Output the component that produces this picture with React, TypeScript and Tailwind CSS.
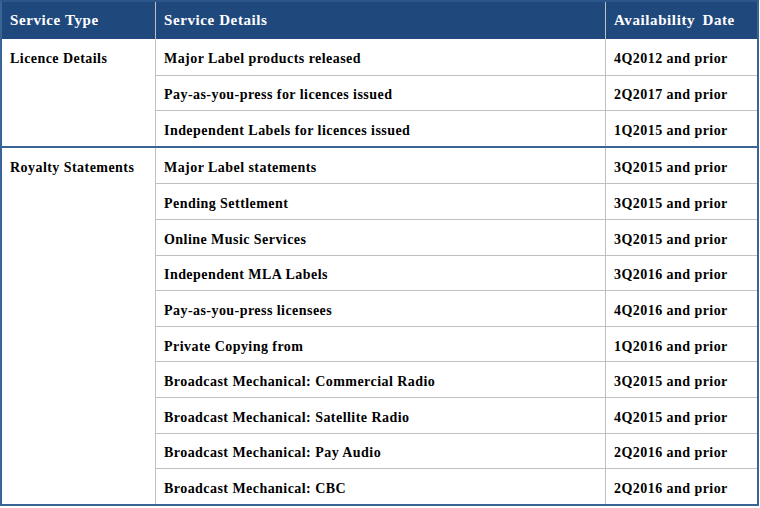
const groups = [
  {
    name: "Licence Details",
    rows: [
      ["Major Label products released", "4Q2012 and prior"],
      ["Pay-as-you-press for licences issued", "2Q2017 and prior"],
      ["Independent Labels for licences issued", "1Q2015 and prior"],
    ],
  },
  {
    name: "Royalty Statements",
    rows: [
      ["Major Label statements", "3Q2015 and prior"],
      ["Pending Settlement", "3Q2015 and prior"],
      ["Online Music Services", "3Q2015 and prior"],
      ["Independent MLA Labels", "3Q2016 and prior"],
      ["Pay-as-you-press licensees", "4Q2016 and prior"],
      ["Private Copying from", "1Q2016 and prior"],
      ["Broadcast Mechanical: Commercial Radio", "3Q2015 and prior"],
      ["Broadcast Mechanical: Satellite Radio", "4Q2015 and prior"],
      ["Broadcast Mechanical: Pay Audio", "2Q2016 and prior"],
      ["Broadcast Mechanical: CBC", "2Q2016 and prior"],
    ],
  },
];

export default function App() {
  return (
    <div className="w-[760px] h-[508px] bg-white font-['Liberation_Serif',serif] font-bold text-black">
      <div className="w-[759px] border-2 border-[#3a6496] border-t-[#2b5689]">
        {/* header */}
        <div className="flex h-[37px] bg-[#1f497d] text-white text-[15px] tracking-[0.6px] items-center">
          <div className="w-[154px] h-full flex items-center pl-2 border-r border-[#c0c0c0]">Service Type</div>
          <div className="w-[450px] h-full flex items-center pl-2 border-r border-[#c0c0c0]">Service Details</div>
          <div className="flex-1 h-full flex items-center pl-2 [word-spacing:3px]">Availability Date</div>
        </div>

        {groups.map((g, gi) => (
          <div key={g.name} className={`flex text-[14px] tracking-[0.45px] ${gi > 0 ? "border-t-2 border-[#3a6496]" : ""}`}>
            <div className="w-[154px] pl-2 pt-[9px] border-r border-[#c0c0c0]">{g.name}</div>
            <div className="flex-1">
              {g.rows.map((r, ri) => (
                <div
                  key={r[0]}
                  className={`flex h-[35.6px] items-center ${ri > 0 ? "border-t border-[#c0c0c0]" : ""}`}
                >
                  <div className="w-[450px] h-full flex items-center pl-2 pt-[4px] border-r border-[#c0c0c0]">{r[0]}</div>
                  <div className="flex-1 h-full flex items-center pl-2 pt-[4px]">{r[1]}</div>
                </div>
              ))}
            </div>
          </div>
        ))}
      </div>
    </div>
  );
}
